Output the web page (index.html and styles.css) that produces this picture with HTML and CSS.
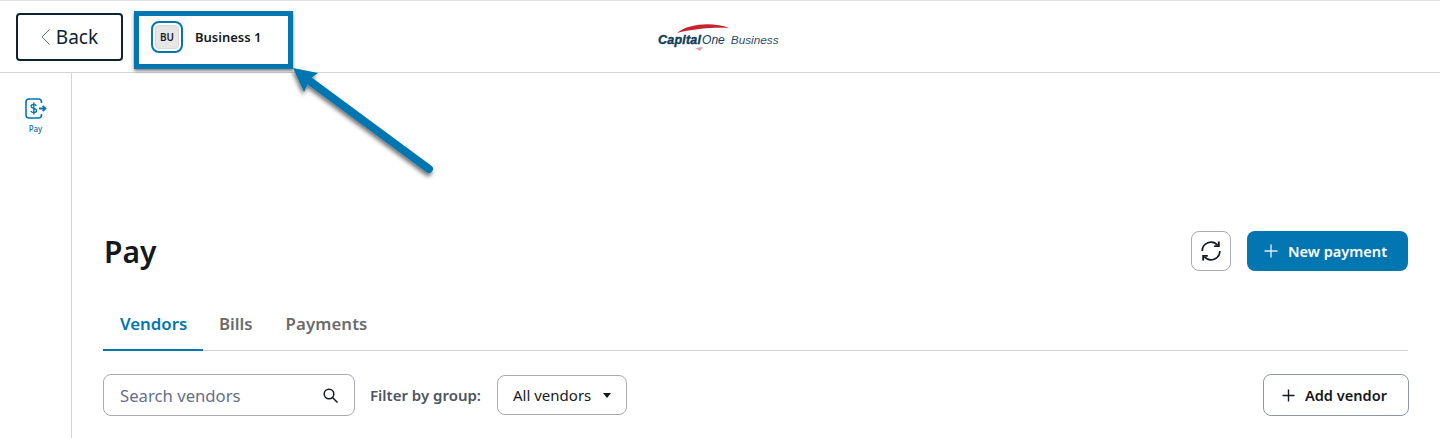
FILE: index.html
```html
<!DOCTYPE html>
<html lang="en">
<head>
    <meta charset="UTF-8">
    <meta name="viewport" content="width=device-width, initial-scale=1.0">
    <title>Pay</title>
    <link rel="stylesheet" href="styles.css">
</head>
<body>
    <header class="topbar">
        <button class="backBtn">
            <svg width="10" height="16" viewBox="0 0 10 16" fill="none" stroke="#6d7680" stroke-width="1"><path d="M8.500 .5 1 8l7.500 7.500"/></svg>
            Back
        </button>
        <div class="account">
            <div class="avatar"><span class="avatarInner">BU</span></div>
            <span class="accountName">Business 1</span>
        </div>
        <div class="logo">
            <svg class="swoosh" width="54" height="28" viewBox="0 0 54 28"><path d="M53 4C38-2 13-1 1 9 16 5 36 3 53 4Z" fill="#c8242f"/><path d="M19 24 24 27 27 23Z" fill="#e3a0a4"/></svg>
            <span class="logoCapital">Capital</span><span class="logoOne">One</span><span class="logoBusiness">Business</span>
        </div>
    </header>

    <div class="layout">
        <nav class="sidebar">
            <svg width="24" height="22" viewBox="0 0 24 22" fill="none" stroke="#0276b1" stroke-width="1.600">
                <path d="M17.500 5V4a3 3 0 0 0-3-3H5a3 3 0 0 0-3 3v13a3 3 0 0 0 3 3h9.500a3 3 0 0 0 3-3v-1"/>
                <path d="M12.400 7.800C11.800 6.800 10.900 6.400 9.700 6.400 8.200 6.400 7.100 7.200 7.100 8.300c0 2.700 5.500 1.500 5.500 4.300 0 1.200-1.200 2-2.800 2-1.300 0-2.400-.6-3-1.600M9.800 4.600v11.800" stroke-width="1.400"/>
                <path d="M15 10.500h6.500M18.700 7.800l2.800 2.700-2.800 2.700" stroke-width="1.800"/>
            </svg>
            <span class="sidebarLabel">Pay</span>
        </nav>

        <main class="content">
            <div class="titleRow">
                <h1>Pay</h1>
                <div class="titleActions">
                    <button class="refreshBtn">
                        <svg width="24" height="24" viewBox="0 0 24 24" fill="none" stroke="#16191c" stroke-width="1.700">
                            <path d="M3.200 12a8.800 8.800 0 0 1 15.400-5.800M20.800 12a8.800 8.800 0 0 1-15.400 5.800"/>
                            <path d="M19.800 2.500v4.600h-4.600M4.200 21.500v-4.600h4.600" stroke-width="1.900"/>
                        </svg>
                    </button>
                    <button class="primaryBtn">
                        <svg class="plus" width="14" height="14" viewBox="0 0 14 14" stroke="#d9ebf5" stroke-width="1.400"><path d="M7 .5v13M.5 7h13"/></svg>
                        New payment
                    </button>
                </div>
            </div>

            <div class="tabs">
                <a class="tab active">Vendors</a>
                <a class="tab">Bills</a>
                <a class="tab">Payments</a>
            </div>

            <div class="controls">
                <div class="search">
                    <span class="searchText">Search vendors</span>
                    <svg width="15" height="15" viewBox="0 0 15 15" fill="none" stroke="#16191c" stroke-width="1.500"><circle cx="6" cy="6" r="4.800"/><path d="M9.500 9.500 14.500 14.500"/></svg>
                </div>
                <label class="filterLabel">Filter by group:</label>
                <div class="select">All vendors<span class="caret"></span></div>
                <button class="outlineBtn">
                    <svg class="plus" width="13" height="13" viewBox="0 0 13 13" stroke="#16191c" stroke-width="1.400"><path d="M6.500 .5v12M.5 6.500h12"/></svg>
                    Add vendor
                </button>
            </div>
        </main>
    </div>

    <!-- annotation on top of the screenshot -->
    <div class="calloutBox"></div>
    <svg class="calloutArrow" width="165" height="125" viewBox="0 0 165 125">
        <defs>
            <filter id="arrowShadow" x="-20%" y="-20%" width="140%" height="140%">
                <feDropShadow dx="-1" dy="3" stdDeviation="2" flood-color="#000" flood-opacity="0.55"/>
            </filter>
        </defs>
        <g filter="url(#arrowShadow)">
            <path d="M8 5 33 10 25 16 19 29Z" fill="#0276b1"/>
            <path d="M22 16 144 106" stroke="#0276b1" stroke-width="8" stroke-linecap="round"/>
        </g>
    </svg>
</body>
</html>
```

FILE: styles.css
```css
:root {
    --blue: #0276b1;
    --line: #d4d4d4;
    --border: #a8abb3;
    --dark: #16191c;
}

* {
    box-sizing: border-box;
}

body {
    margin: 0;
    height: 438px;
    overflow: hidden;
    background-color: #fff;
    color: var(--dark);
    font-family: "Noto Sans", "Open Sans", Arial, sans-serif;
}

button {
    font-family: inherit;
    cursor: pointer;
}

.topbar {
    position: relative;
    display: flex;
    align-items: center;
    height: 73px;
    padding-left: 16px;
    border-top: 1px solid #e0e0e0;
    border-bottom: 1px solid var(--line);
}

.backBtn {
    display: flex;
    align-items: center;
    justify-content: center;
    gap: 5px;
    width: 107px;
    height: 48px;
    background: #fff;
    border: 2px solid #0d2233;
    border-radius: 4px;
    color: #0d2233;
    font-size: 19px;
}

.account {
    display: flex;
    align-items: center;
    margin-left: 28px;
}

.avatar {
    display: flex;
    align-items: center;
    justify-content: center;
    width: 32px;
    height: 32px;
    border: 2px solid var(--blue);
    border-radius: 8px;
}

.avatarInner {
    display: flex;
    align-items: center;
    justify-content: center;
    width: 24px;
    height: 24px;
    background-color: #e6e6e6;
    border: 1px solid #d8d8d8;
    border-radius: 4px;
    font-size: 10px;
    font-weight: 600;
}

.accountName {
    margin-left: 12px;
    font-size: 13px;
    font-weight: 600;
}

.logo {
    position: absolute;
    left: 658px;
    top: 31px;
    display: flex;
    align-items: baseline;
    color: #0d3d5c;
    font-family: "Liberation Sans", Arial, sans-serif;
    font-style: italic;
    line-height: 16px;
}

.swoosh {
    position: absolute;
    left: 18px;
    top: -8px;
}

.logoCapital {
    font-size: 12.500px;
    font-weight: 700;
    letter-spacing: 0.200px;
    -webkit-text-stroke: 0.400px #0d3d5c;
}

.logoOne {
    margin-left: 1px;
    font-size: 12px;
}

.logoBusiness {
    margin-left: 6px;
    font-size: 11.800px;
    color: #2f4f6f;
}

.layout {
    display: flex;
    height: 365px;
}

.sidebar {
    display: flex;
    flex-direction: column;
    align-items: center;
    flex: 0 0 72px;
    padding-top: 25px;
    border-right: 1px solid var(--line);
}

.sidebarLabel {
    margin-top: 3px;
    color: var(--blue);
    font-size: 8px;
    font-weight: 500;
}

.content {
    flex: 1;
    padding: 158px 32px 0 31px;
}

.titleRow {
    display: flex;
    align-items: center;
    justify-content: space-between;
    height: 40px;
}

h1 {
    margin: 0 0 0 1px;
    font-size: 30px;
    font-weight: 600;
}

.titleActions {
    display: flex;
    gap: 16px;
}

.refreshBtn {
    display: flex;
    align-items: center;
    justify-content: center;
    width: 40px;
    height: 40px;
    padding: 0;
    background: #fff;
    border: 1px solid var(--border);
    border-radius: 8px;
}

.primaryBtn {
    display: flex;
    align-items: center;
    justify-content: center;
    width: 161px;
    height: 40px;
    padding: 0 4px 0 0;
    background-color: var(--blue);
    border: none;
    border-radius: 8px;
    color: #fff;
    font-size: 14.600px;
    font-weight: 600;
}

.plus {
    margin-right: 10px;
}

.tabs {
    display: flex;
    height: 53px;
    margin-top: 27px;
    border-bottom: 1px solid var(--line);
}

.tab {
    height: 53px;
    padding: 14px 16px 0;
    color: #6b6b6b;
    font-size: 16.800px;
    font-weight: 600;
}

.tab:last-child {
    padding-left: 17px;
    letter-spacing: 0.100px;
}

.tab.active {
    width: 100px;
    padding-left: 17px;
    color: var(--blue);
    border-bottom: 2px solid var(--blue);
}

.controls {
    display: flex;
    align-items: center;
    margin-top: 23px;
}

.search {
    display: flex;
    align-items: center;
    justify-content: space-between;
    width: 252px;
    height: 42px;
    padding: 0 16px;
    border: 1px solid var(--border);
    border-radius: 8px;
}

.searchText {
    color: #66708a;
    font-size: 16.700px;
}

.filterLabel {
    margin-left: 15px;
    color: #4d5560;
    font-size: 15px;
    font-weight: 600;
}

.select {
    display: flex;
    align-items: center;
    justify-content: space-between;
    width: 130px;
    height: 40px;
    margin-left: 16px;
    padding: 0 15px;
    border: 1px solid var(--border);
    border-radius: 8px;
    font-size: 15px;
}

.caret {
    width: 0;
    height: 0;
    border-left: 4.500px solid transparent;
    border-right: 4.500px solid transparent;
    border-top: 5px solid var(--dark);
}

.outlineBtn {
    display: flex;
    align-items: center;
    justify-content: center;
    width: 146px;
    height: 42px;
    margin-left: auto;
    margin-right: -1px;
    padding: 0 3px 0 0;
    background: #fff;
    border: 1px solid #8d96a8;
    border-radius: 8px;
    color: var(--dark);
    font-size: 14.600px;
    font-weight: 600;
}

.calloutBox {
    position: absolute;
    left: 134px;
    top: 11px;
    width: 159px;
    height: 58px;
    border: 5px solid var(--blue);
    box-shadow: 0 2px 3px rgba(0, 0, 0, 0.5);
}

.calloutArrow {
    position: absolute;
    left: 285px;
    top: 63px;
}
```
